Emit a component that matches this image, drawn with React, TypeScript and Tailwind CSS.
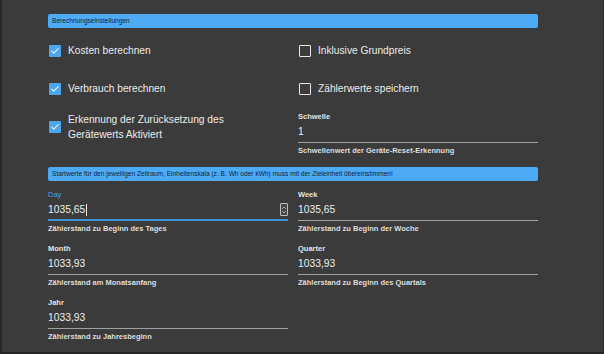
import { Check } from 'lucide-react';

type FieldProps = {
  label: string;
  value: string;
  helper: string;
  focused?: boolean;
};

function Field({ label, value, helper, focused }: FieldProps) {
  return (
    <div className="flex flex-col">
      <div className={`h-[10px] leading-[10px] text-[7.5px] ${focused ? 'text-[#4aa3e0]' : 'font-bold text-[#e4e4e4]'}`}>
        {label}
      </div>
      <div className={`relative h-[21px] flex items-center ${focused ? 'border-b-2 border-[#3f95d6]' : 'border-b border-[#a0a0a0]'}`}>
        <span className="text-[10.3px] text-[#ededed]">{value}</span>
        {focused && (
          <>
            <span className="w-px h-[12px] bg-[#ededed] ml-px" />
            <div className="absolute right-0 top-[3px] w-[8px] h-[13px] border border-[#bdbdbd] rounded-[1px] flex flex-col items-center justify-center bg-[#454545]">
              <svg viewBox="0 0 8 12" className="w-[6px] h-[10px]" fill="none" stroke="#cfcfcf" strokeWidth="1">
                <path d="M1.5 4.5 L4 2 L6.5 4.5" />
                <path d="M1.5 7.5 L4 10 L6.5 7.5" />
              </svg>
            </div>
          </>
        )}
      </div>
      <div className="h-[16px] leading-[16px] text-[7.5px] font-bold text-[#dedede]">{helper}</div>
    </div>
  );
}

function CheckRow({ label, checked }: { label: string; checked: boolean }) {
  return (
    <div className="flex items-center h-[16px] pl-px gap-[7px]">
      {checked ? (
        <div className="w-[12px] h-[12px] rounded-[1px] bg-[#4ba6ee] flex items-center justify-center">
          <Check className="w-[10px] h-[10px] text-white" strokeWidth={2.5} />
        </div>
      ) : (
        <div className="w-[12px] h-[12px] rounded-[1px] border-[1.5px] border-[#e8e8e8]" />
      )}
      <span className="text-[10.2px] text-[#ececec]">{label}</span>
    </div>
  );
}

function Bar({ text }: { text: string }) {
  return (
    <div className="h-[14px] rounded-[2px] bg-[#4dabf5] flex items-center px-[4px]">
      <span className="text-[6.6px] text-[#13233a] whitespace-nowrap">{text}</span>
    </div>
  );
}

export default function App() {
  return (
    <div className="w-[604px] h-[354px] bg-[#3b3b3b] border-l-2 border-r border-b-2 border-[#262626] font-['Liberation_Sans',Arial,sans-serif] overflow-hidden">
      <div className="pl-[46px] pr-[65px] pt-[14px]">
        <Bar text="Berechnungseinstellungen" />

        <div className="grid grid-cols-2 gap-x-[10px] mt-[15px]">
          <CheckRow label="Kosten berechnen" checked />
          <CheckRow label="Inklusive Grundpreis" checked={false} />
        </div>

        <div className="grid grid-cols-2 gap-x-[10px] mt-[22px]">
          <CheckRow label="Verbrauch berechnen" checked />
          <CheckRow label="Zählerwerte speichern" checked={false} />
        </div>

        <div className="grid grid-cols-2 gap-x-[10px] mt-[15px]">
          <div className="flex items-center h-[30px] pl-px gap-[7px]">
            <div className="w-[12px] h-[12px] shrink-0 rounded-[1px] bg-[#4ba6ee] flex items-center justify-center">
              <Check className="w-[10px] h-[10px] text-white" strokeWidth={2.5} />
            </div>
            <span className="text-[10.2px] leading-[15px] text-[#ececec]">
              Erkennung der Zurücksetzung des
              <br />
              Gerätewerts Aktiviert
            </span>
          </div>
          <Field label="Schwelle" value="1" helper="Schwellenwert der Geräte-Reset-Erkennung" />
        </div>

        <div className="mt-[8px]">
          <Bar text="Startwerte für den jeweiligen Zeitraum, Einheitenskala (z. B. Wh oder kWh) muss mit der Zieleinheit übereinstimmen!" />
        </div>

        <div className="grid grid-cols-2 gap-x-[10px] gap-y-[7px] mt-[9px]">
          <Field label="Day" value="1035,65" helper="Zählerstand zu Beginn des Tages" focused />
          <Field label="Week" value="1035,65" helper="Zählerstand zu Beginn der Woche" />
          <Field label="Month" value="1033,93" helper="Zählerstand am Monatsanfang" />
          <Field label="Quarter" value="1033,93" helper="Zählerstand zu Beginn des Quartals" />
          <Field label="Jahr" value="1033,93" helper="Zählerstand zu Jahresbeginn" />
        </div>
      </div>
    </div>
  );
}
